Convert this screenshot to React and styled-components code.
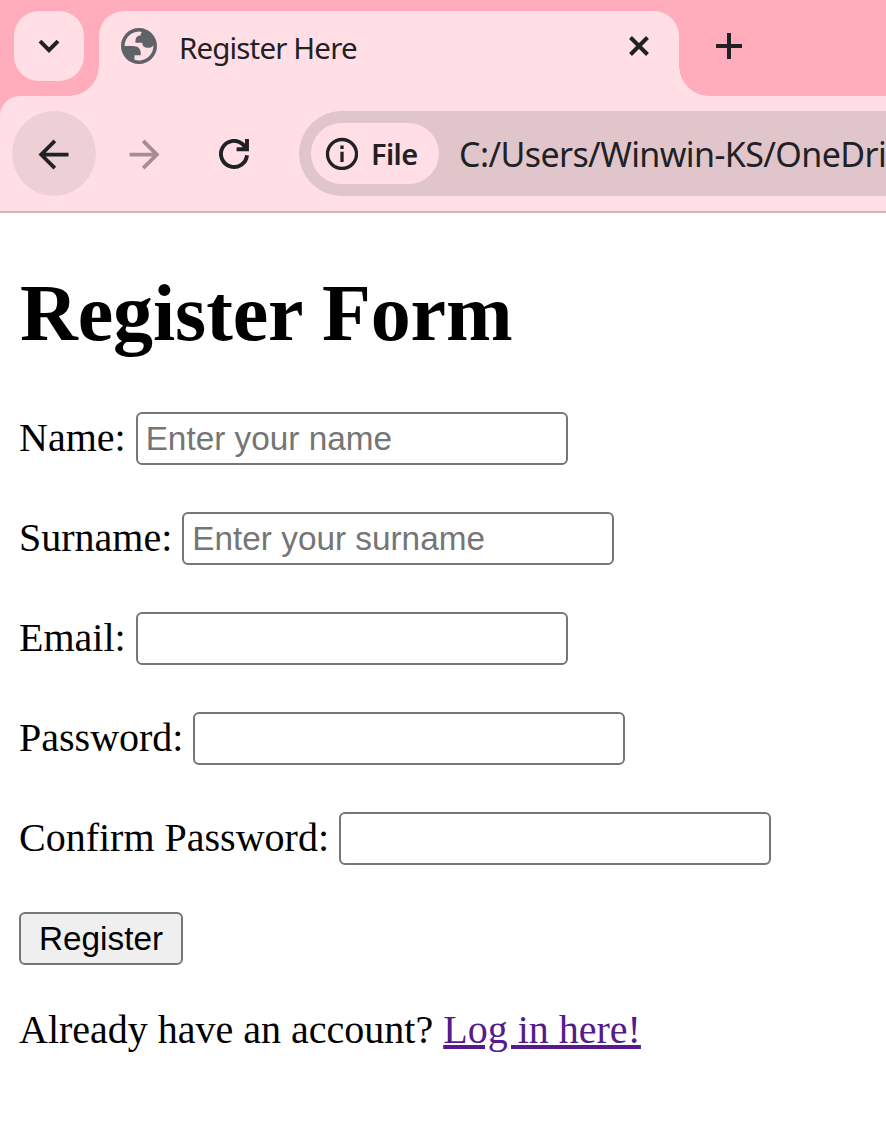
import React from "react";
import styled, { createGlobalStyle } from "styled-components";

const GlobalStyle = createGlobalStyle`
  body { margin: 0; background: #fff; overflow: hidden; }
  * { box-sizing: border-box; }
`;
const ink = "#1f2125";
const Window = styled.div`
  width: 886px;
  height: 1139px;
  overflow: hidden;
  background: #fff;
`;
const TabStrip = styled.div`
  display: flex;
  align-items: flex-start;
  height: 96px;
  padding: 11px 0 0 14px;
  background: #ffadbc;
`;
const TabSearch = styled.button`
  display: flex;
  align-items: center;
  justify-content: center;
  width: 70px;
  height: 70px;
  padding: 0;
  border: 0;
  border-radius: 25px;
  background: #ffdfe5;
`;
const Tab = styled.div`
  position: relative;
  display: flex;
  align-items: flex-start;
  width: 580px;
  height: 85px;
  margin-left: 15px;
  padding: 17px 25px 0 22px;
  border-radius: 25px 25px 0 0;
  background: #ffdfe5;
  &::before, &::after {
    content: "";
    position: absolute;
    bottom: 0;
    width: 30px;
    height: 30px;
  }
  &::before { left: -30px; background: radial-gradient(circle at 0 0, transparent 29.5px, #ffdfe5 30px); }
  &::after { right: -30px; background: radial-gradient(circle at 100% 0, transparent 29.5px, #ffdfe5 30px); }
`;
const TabTitle = styled.span`
  flex: 1;
  margin: 0 0 0 22px;
  font: 29.5px/40px "Noto Sans", sans-serif;
  letter-spacing: -0.85px;
  white-space: nowrap;
  color: ${ink};
`;
const IconButton = styled.button`
  display: flex;
  align-items: center;
  justify-content: center;
  padding: 0;
  border: 0;
  background: transparent;
  color: ${ink};
`;
const CloseButton = styled(IconButton)`
  width: 30px;
  height: 30px;
  margin-top: 3px;
`;
const NewTab = styled(IconButton)`
  width: 70px;
  height: 70px;
  margin-left: 15px;
`;
const NavButton = styled(IconButton)`
  width: 84px;
  height: 85px;
  padding: 1px ${(p) => (p.$active ? 1 : 0)}px 0 0;
  border-radius: 50%;
  background: ${(p) => (p.$active ? "#ecd0d5" : "transparent")};
  color: ${(p) => (p.$muted ? "#a48e94" : ink)};
`;
const ToolbarBack = styled.div`
  background: #ffadbc;
`;
const Toolbar = styled.div`
  display: flex;
  gap: 6px;
  height: 117px;
  padding: 15px 0 0 12px;
  border-bottom: 2px solid #d0b5bb;
  border-top-left-radius: 20px;
  background: #ffdfe5;
`;
const AddressBar = styled.div`
  display: flex;
  flex: 1;
  align-items: center;
  height: 85px;
  margin-left: 17px;
  padding-left: 12px;
  border-radius: 43px 0 0 43px;
  background: #e0c5ca;
  overflow: hidden;
`;
const FileChip = styled.div`
  display: flex;
  flex: none;
  align-items: center;
  gap: 13px;
  width: 128px;
  height: 61px;
  padding-left: 14px;
  border-radius: 31px;
  background: #ffdfe5;
  color: ${ink};
  font: 600 29px/60px "Noto Sans", sans-serif;
  letter-spacing: -0.6px;
`;
const Url = styled.span`
  margin-left: 20px;
  font: 34px/60px "Noto Sans", sans-serif;
  letter-spacing: -0.6px;
  white-space: nowrap;
  color: ${ink};
`;
const Page = styled.main`
  padding: 54px 20px 0 19px;
  font: 40px/45px "Liberation Serif", serif;
  color: #000;
`;
const Title = styled.h1`
  margin: 0 0 53px;
  padding-left: 1px;
  font-size: 80px;
  line-height: 92px;
  letter-spacing: -0.1px;
`;
const Field = styled.label`
  display: flex;
  align-items: flex-start;
  gap: 10px;
  height: 53px;
  margin-bottom: 47px;
  line-height: 51px;
  white-space: nowrap;
`;
const Input = styled.input`
  width: 432px;
  height: 53px;
  padding: 2px 8px;
  border: 2px solid #767676;
  border-radius: 6px;
  background: #fff;
  font: 33.333px "Liberation Sans", Arial, sans-serif;
  &::placeholder { color: #757575; }
`;
const Submit = styled.button`
  display: block;
  width: 164px;
  height: 53px;
  padding: 0;
  border: 2px solid #767676;
  border-radius: 6px;
  background: #efefef;
  color: #000;
  font: 33.333px "Liberation Sans", Arial, sans-serif;
`;
const Note = styled.p`
  margin: 42px 0 0;
`;
const Link = styled.a`
  color: #551a8b;
  text-decoration: underline;
  text-decoration-thickness: 4px;
`;

const fields = [
  { label: "Name:", placeholder: "Enter your name", type: "text" },
  { label: "Surname:", placeholder: "Enter your surname", type: "text" },
  { label: "Email:", type: "email" },
  { label: "Password:", type: "password" },
  { label: "Confirm Password:", type: "password" },
];

const Chevron = () => (
  <svg width="24" height="24" viewBox="0 0 24 24" fill="none" stroke={ink} strokeWidth="4">
    <path d="M3 7.200l9 9 9-9" />
  </svg>
);
const Globe = () => (
  <svg width="36" height="36" viewBox="2 2 20 20" fill="#5f6368">
    <path
      fillRule="evenodd"
      d="M12 2C6.480 2 2 6.480 2 12s4.480 10 10 10 10-4.480 10-10S17.520 2 12 2zM4 12h4.400c3.407.022 4.922 1.730 4.543 5.127H9.488v2.470a8.004 8.004 0 0 0 10.498-8.083C19.327 12.504 18.332 13 17 13c-2.137 0-3.206-.916-3.206-2.750h-3.748c-.274-2.728.683-4.092 2.870-4.092 0-.975.327-1.597.811-1.970A8.004 8.004 0 0 0 4 12z"
    />
  </svg>
);
const Close = () => (
  <svg width="24" height="24" viewBox="0 0 24 24" stroke={ink} strokeWidth="4">
    <path d="M3.500 3.500l17 17M20.500 3.500l-17 17" />
  </svg>
);
const Plus = () => (
  <svg width="26" height="26" viewBox="0 0 26 26" stroke={ink} strokeWidth="4">
    <path d="M13 0v26M0 13h26" />
  </svg>
);
const Arrow = ({ flip }) => (
  <svg width="45" height="45" viewBox="0 0 24 24" fill="currentColor">
    <path
      transform={flip ? "translate(24 0) scale(-1 1)" : undefined}
      d="M20 11H7.830l5.590-5.590L12 4l-8 8 8 8 1.410-1.410L7.830 13H20v-2z"
    />
  </svg>
);
const Reload = () => (
  <svg width="30" height="30" viewBox="0 0 30 30" fill="none" stroke="currentColor" strokeWidth="3.900">
    <path d="M28 16.200A13.050 13.050 0 1 1 23.500 5L27 9M28 0v10.300H17.600" />
  </svg>
);
const Info = () => (
  <svg width="33" height="33" viewBox="0 0 33 33" fill="none" stroke={ink} strokeWidth="3.300">
    <circle cx="17" cy="17" r="14.500" />
    <path d="M17 14.800v10.200M17 8.500v3.500" />
  </svg>
);

export default function App() {
  return (
    <Window>
      <GlobalStyle />
      <TabStrip>
        <TabSearch aria-label="Search tabs"><Chevron /></TabSearch>
        <Tab>
          <Globe />
          <TabTitle>Register Here</TabTitle>
          <CloseButton aria-label="Close tab"><Close /></CloseButton>
        </Tab>
        <NewTab aria-label="New tab"><Plus /></NewTab>
      </TabStrip>
      <ToolbarBack>
        <Toolbar>
          <NavButton $active aria-label="Back"><Arrow /></NavButton>
          <NavButton $muted aria-label="Forward"><Arrow flip /></NavButton>
          <NavButton aria-label="Reload"><Reload /></NavButton>
          <AddressBar>
            <FileChip><Info />File</FileChip>
            <Url>C:/Users/Winwin-KS/OneDri</Url>
          </AddressBar>
        </Toolbar>
      </ToolbarBack>
      <Page>
        <Title>Register Form</Title>
        {fields.map((f) => (
          <Field key={f.label}>
            {f.label}
            <Input type={f.type} placeholder={f.placeholder} />
          </Field>
        ))}
        <Submit>Register</Submit>
        <Note>Already have an account? <Link href="#">Log in here!</Link></Note>
      </Page>
    </Window>
  );
}
